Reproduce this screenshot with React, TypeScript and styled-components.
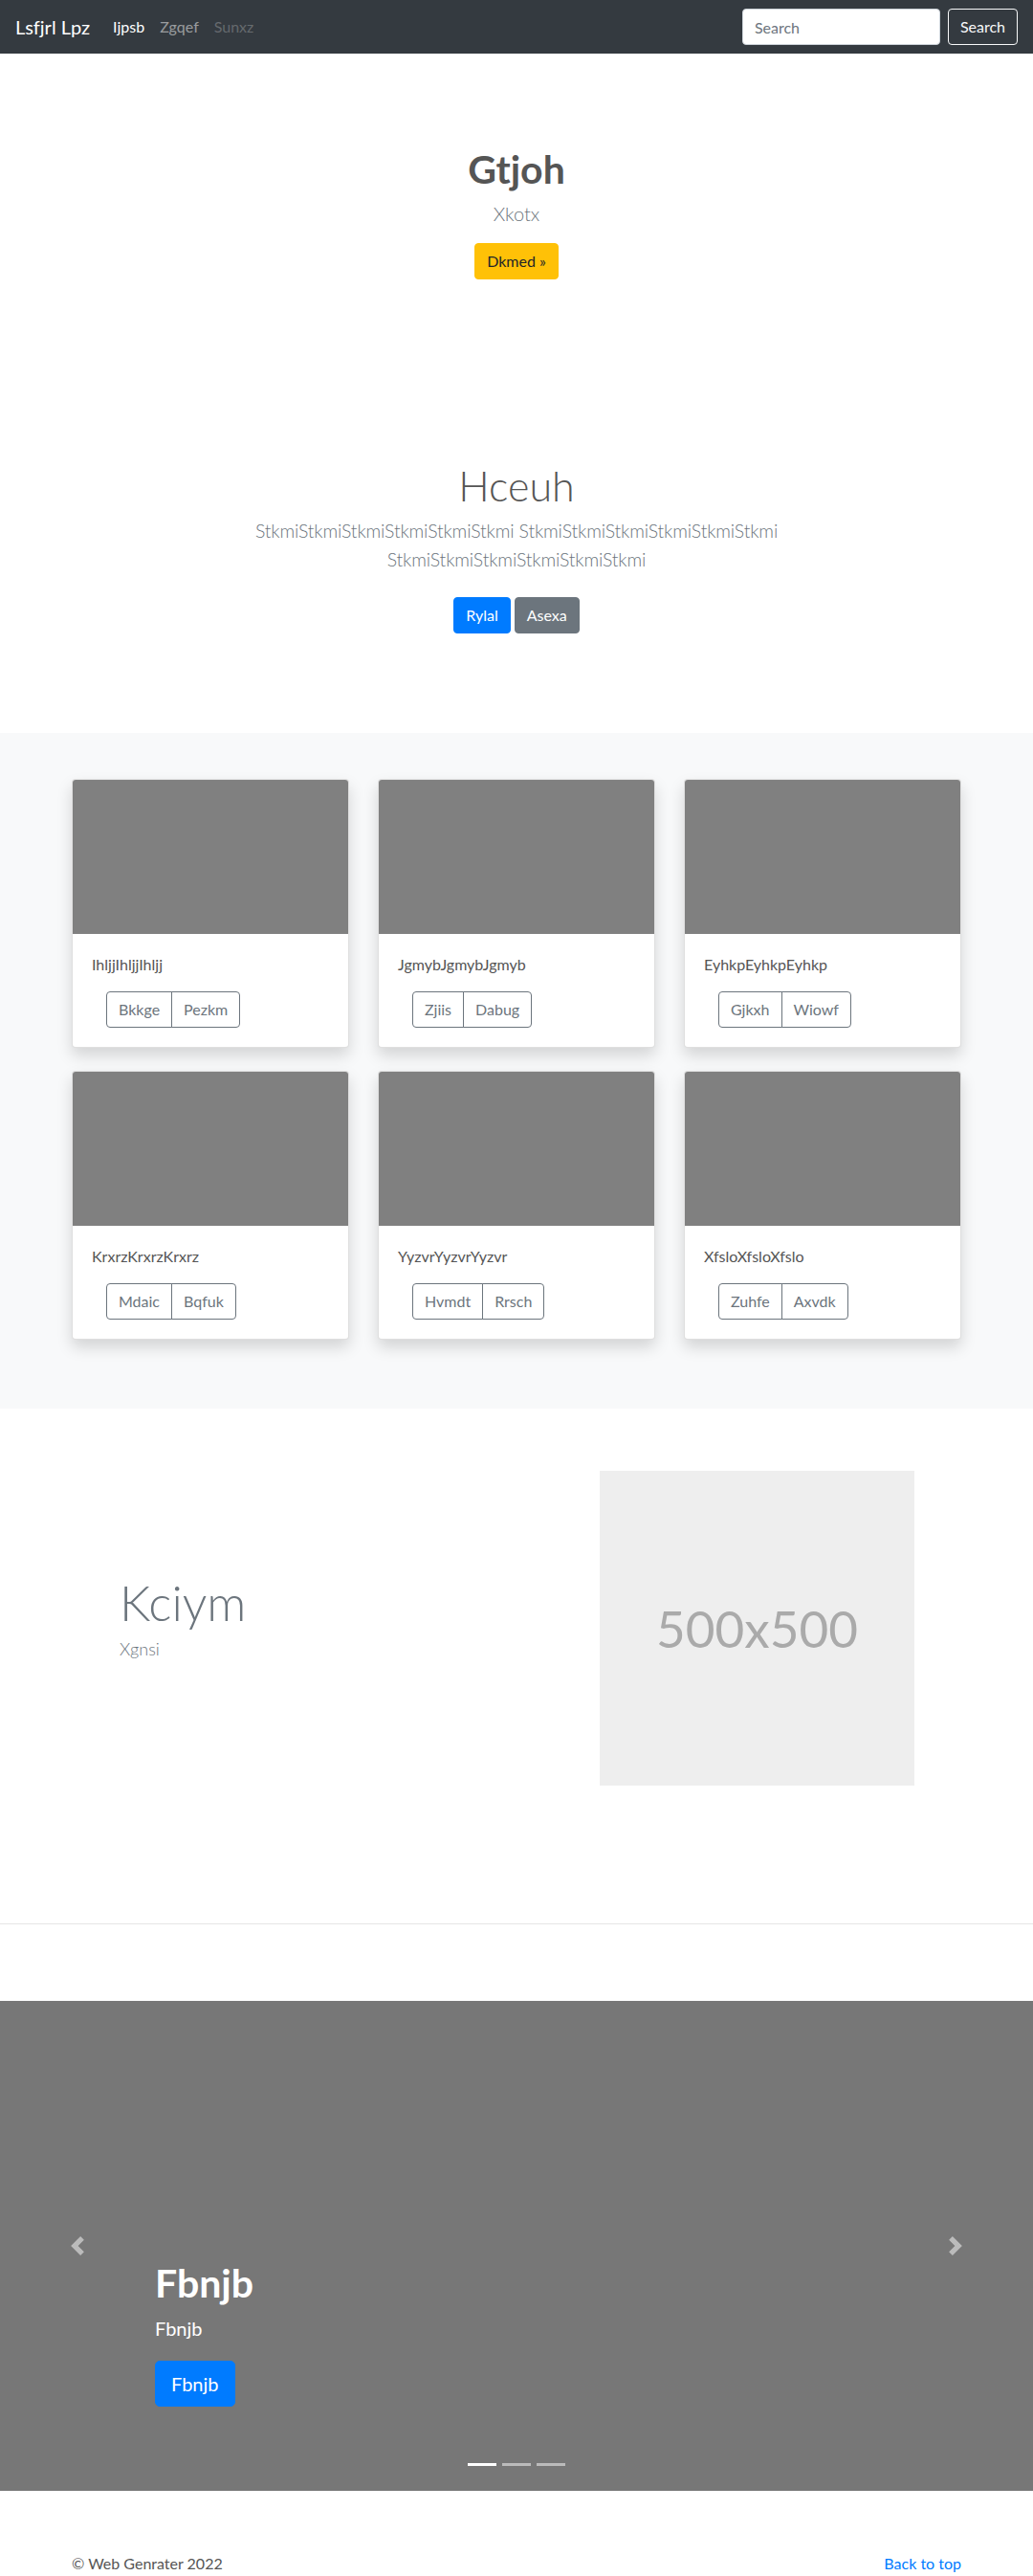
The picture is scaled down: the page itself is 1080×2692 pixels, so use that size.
import React from 'react';
import styled, { createGlobalStyle, css } from 'styled-components';

const GlobalStyle = createGlobalStyle`
   * {
      box-sizing: border-box;
   }
   body {
      margin: 0;
      font-family: Lato, 'Open Sans', sans-serif;
      font-size: 16px;
      line-height: 1.5;
      font-variant-ligatures: none;
      color: #212529;
      background: #fff;
   }
`;

type LinkState = 'active' | 'idle' | 'disabled';

const navLinks: { label: string; state: LinkState }[] = [
   { label: 'Ijpsb', state: 'active' },
   { label: 'Zgqef', state: 'idle' },
   { label: 'Sunxz', state: 'disabled' },
];

const albumCards = [
   { title: 'IhljjIhljjIhljj', actions: ['Bkkge', 'Pezkm'] },
   { title: 'JgmybJgmybJgmyb', actions: ['Zjiis', 'Dabug'] },
   { title: 'EyhkpEyhkpEyhkp', actions: ['Gjkxh', 'Wiowf'] },
   { title: 'KrxrzKrxrzKrxrz', actions: ['Mdaic', 'Bqfuk'] },
   { title: 'YyzvrYyzvrYyzvr', actions: ['Hvmdt', 'Rrsch'] },
   { title: 'XfsloXfsloXfslo', actions: ['Zuhfe', 'Axvdk'] },
];

const word = 'Stkmi'.repeat(6);

function Chevron({ dir }: { dir: 'prev' | 'next' }) {
   return (
      <svg width='20' height='20' viewBox='0 0 8 8' fill='#fff'>
         {dir === 'prev' ? (
            <path d='M5.25 0l-4 4 4 4 1.5-1.5L4.25 4l2.5-2.5L5.25 0z' />
         ) : (
            <path d='M2.75 0l-1.5 1.5L3.75 4l-2.5 2.5L2.75 8l4-4-4-4z' />
         )}
      </svg>
   );
}

export default function App() {
   return (
      <>
         <GlobalStyle />
         <Navbar>
            <Brand href='#'>Lsfjrl Lpz</Brand>
            <NavList>
               {navLinks.map((l) => (
                  <li key={l.label}>
                     <NavLink href='#' $state={l.state}>
                        {l.label}
                     </NavLink>
                  </li>
               ))}
            </NavList>
            <SearchForm onSubmit={(e) => e.preventDefault()}>
               <SearchInput type='text' placeholder='Search' />
               <OutlineLightButton type='submit'>Search</OutlineLightButton>
            </SearchForm>
         </Navbar>

         <Jumbotron>
            <HeroTitle>Gtjoh</HeroTitle>
            <Lead>Xkotx</Lead>
            <Button $variant='warning'>Dkmed »</Button>
         </Jumbotron>

         <IntroSection>
            <DisplayTitle>Hceuh</DisplayTitle>
            <IntroText>
               {word} {word} {word}
            </IntroText>
            <ButtonRow>
               <Button $variant='primary'>Rylal</Button>
               <Button $variant='secondary'>Asexa</Button>
            </ButtonRow>
         </IntroSection>

         <Album>
            <CardGrid>
               {albumCards.map((c) => (
                  <Card key={c.title}>
                     <CardImage />
                     <CardBody>
                        <CardText>{c.title}</CardText>
                        <ButtonGroup>
                           {c.actions.map((a) => (
                              <GroupButton key={a}>{a}</GroupButton>
                           ))}
                        </ButtonGroup>
                     </CardBody>
                  </Card>
               ))}
            </CardGrid>
         </Album>

         <Featurette>
            <FeatureText>
               <FeatureHeading>Kciym</FeatureHeading>
               <FeatureLead>Xgnsi</FeatureLead>
            </FeatureText>
            <Placeholder>500x500</Placeholder>
         </Featurette>

         <Divider />

         <Carousel>
            <Caption>
               <CaptionTitle>Fbnjb</CaptionTitle>
               <CaptionText>Fbnjb</CaptionText>
               <CaptionAction>
                  <Button $variant='primary' $size='lg'>
                     Fbnjb
                  </Button>
               </CaptionAction>
            </Caption>
            <Control $side='left' href='#'>
               <Chevron dir='prev' />
            </Control>
            <Control $side='right' href='#'>
               <Chevron dir='next' />
            </Control>
            <Indicators>
               <Indicator $active />
               <Indicator />
               <Indicator />
            </Indicators>
         </Carousel>

         <Footer>
            <FooterNote>© Web Genrater 2022</FooterNote>
            <FooterLink href='#'>Back to top</FooterLink>
         </Footer>
      </>
   );
}

const Navbar = styled.nav`
   height: 56px;
   display: flex;
   align-items: center;
   padding: 8px 16px;
   background: #343a40;
`;

const Brand = styled.a`
   font-size: 20px;
   line-height: 30px;
   color: #fff;
   margin-right: 16px;
   text-decoration: none;
`;

const NavList = styled.ul`
   display: flex;
   flex: 1;
   list-style: none;
   margin: 0;
   padding: 0;
`;

const NavLink = styled.a<{ $state: LinkState }>`
   display: block;
   padding: 8px;
   text-decoration: none;
   color: ${(p) =>
      p.$state === 'active'
         ? '#fff'
         : p.$state === 'idle'
         ? 'rgba(255,255,255,0.5)'
         : 'rgba(255,255,255,0.25)'};
`;

const SearchForm = styled.form`
   display: flex;
   align-items: center;
   gap: 8px;
`;

const SearchInput = styled.input`
   width: 207px;
   height: 38px;
   padding: 6px 12px;
   font: inherit;
   color: #495057;
   border: 1px solid #ced4da;
   border-radius: 4px;
   outline: none;
   &::placeholder {
      color: #6c757d;
   }
`;

const OutlineLightButton = styled.button`
   height: 38px;
   padding: 6px 12px;
   font: inherit;
   color: #f8f9fa;
   background: transparent;
   border: 1px solid #f8f9fa;
   border-radius: 4px;
`;

const variants = {
   warning: css`
      background: #ffc107;
      border-color: #ffc107;
      color: #212529;
   `,
   primary: css`
      background: #007bff;
      border-color: #007bff;
      color: #fff;
   `,
   secondary: css`
      background: #6c757d;
      border-color: #6c757d;
      color: #fff;
   `,
};

const Button = styled.button<{
   $variant: keyof typeof variants;
   $size?: 'lg';
}>`
   display: inline-block;
   height: 38px;
   padding: 6px 12px;
   font-family: inherit;
   font-size: 16px;
   line-height: 24px;
   border: 1px solid transparent;
   border-radius: 4px;
   ${(p) => variants[p.$variant]}
   ${(p) =>
      p.$size === 'lg' &&
      css`
         height: 48px;
         padding: 8px 16px;
         font-size: 20px;
         line-height: 30px;
         border-radius: 5px;
      `}
`;

const Jumbotron = styled.section`
   display: flex;
   flex-direction: column;
   align-items: center;
   text-align: center;
   padding: 97px 0 96px;
`;

const HeroTitle = styled.h1`
   margin: 0 0 7px;
   font-size: 41px;
   line-height: 48px;
   font-weight: 700;
   color: #555;
`;

const Lead = styled.p`
   margin: 0 0 16px;
   font-size: 20px;
   line-height: 30px;
   font-weight: 300;
   color: #6c757d;
`;

const IntroSection = styled.section`
   display: flex;
   flex-direction: column;
   align-items: center;
   text-align: center;
   padding: 93px 0 104px;
`;

const DisplayTitle = styled.h1`
   margin: 0 0 6px;
   font-size: 43px;
   line-height: 53px;
   font-weight: 300;
   color: #555;
`;

const IntroText = styled.p`
   width: 610px;
   margin: 0 0 16px;
   font-size: 19.5px;
   line-height: 30px;
   letter-spacing: -0.15px;
   font-weight: 300;
   color: #6c757d;
`;

const ButtonRow = styled.div`
   display: flex;
   gap: 4px;
   margin: 8px 0 0;
`;

const Album = styled.section`
   background: #f8f9fa;
   padding: 48px 0 48px;
`;

const CardGrid = styled.div`
   width: 960px;
   margin: 0 auto;
   padding: 0 15px;
   display: grid;
   grid-template-columns: repeat(3, 1fr);
   column-gap: 30px;
   row-gap: 24px;
   padding-bottom: 24px;
`;

const Card = styled.div`
   background: #fff;
   border: 1px solid rgba(0, 0, 0, 0.125);
   border-radius: 4px;
   overflow: hidden;
   box-shadow: 0 8px 16px rgba(0, 0, 0, 0.15);
`;

const CardImage = styled.div`
   height: 161px;
   background: #808080;
`;

const CardBody = styled.div`
   padding: 20px;
`;

const CardText = styled.p`
   margin: 0 0 16px;
   font-size: 16px;
   line-height: 24px;
   color: #555;
`;

const ButtonGroup = styled.div`
   display: inline-flex;
   margin-left: 15px;
`;

const GroupButton = styled.button`
   height: 38px;
   padding: 6px 12px;
   font-family: inherit;
   font-size: 16px;
   line-height: 24px;
   color: #6c757d;
   background: transparent;
   border: 1px solid #6c757d;
   &:first-child {
      border-radius: 4px 0 0 4px;
   }
   &:last-child {
      border-radius: 0 4px 4px 0;
      margin-left: -1px;
   }
`;

const Featurette = styled.section`
   width: 960px;
   margin: 0 auto;
   display: flex;
   align-items: center;
   padding: 65px 64px 144px 65px;
`;

const FeatureText = styled.div`
   flex: 1;
   padding-bottom: 22px;
`;

const FeatureHeading = styled.h2`
   margin: 0 0 4px;
   font-size: 51px;
   line-height: 62px;
   font-weight: 300;
   color: #6c757d;
`;

const FeatureLead = styled.p`
   margin: 0;
   font-size: 18px;
   line-height: 27px;
   font-weight: 300;
   color: #6c757d;
`;

const Placeholder = styled.div`
   width: 329px;
   height: 329px;
   display: flex;
   align-items: center;
   justify-content: center;
   background: #eee;
   color: #aaa;
   font-size: 53px;
`;

const Divider = styled.hr`
   margin: 0 0 80px;
   border: 0;
   border-top: 1px solid #e5e5e5;
`;

const Carousel = styled.div`
   position: relative;
   height: 512px;
   background: #777;
   display: flex;
   align-items: flex-end;
`;

const Caption = styled.div`
   padding: 0 162px 72px;
   color: #fff;
`;

const CaptionTitle = styled.h1`
   margin: 0 0 8px;
   font-size: 41px;
   line-height: 48px;
   font-weight: 700;
`;

const CaptionText = styled.p`
   margin: 0 0 19px;
   font-size: 20px;
   line-height: 30px;
`;

const CaptionAction = styled.p`
   margin: 0 0 16px;
`;

const Control = styled.a<{ $side: 'left' | 'right' }>`
   position: absolute;
   top: 0;
   bottom: 0;
   ${(p) => p.$side}: 0;
   width: 15%;
   display: flex;
   align-items: center;
   justify-content: center;
   opacity: 0.5;
`;

const Indicators = styled.div`
   position: absolute;
   left: 0;
   right: 0;
   bottom: 26px;
   display: flex;
   justify-content: center;
   gap: 6px;
`;

const Indicator = styled.span<{ $active?: boolean }>`
   width: 30px;
   height: 3px;
   background: #fff;
   opacity: ${(p) => (p.$active ? 1 : 0.5)};
`;

const Footer = styled.footer`
   width: 960px;
   margin: 0 auto;
   padding: 64px 15px 0;
   display: flex;
   justify-content: space-between;
   line-height: 24px;
`;

const FooterNote = styled.p`
   margin: 0;
   color: #555;
`;

const FooterLink = styled.a`
   color: #007bff;
   text-decoration: none;
`;
